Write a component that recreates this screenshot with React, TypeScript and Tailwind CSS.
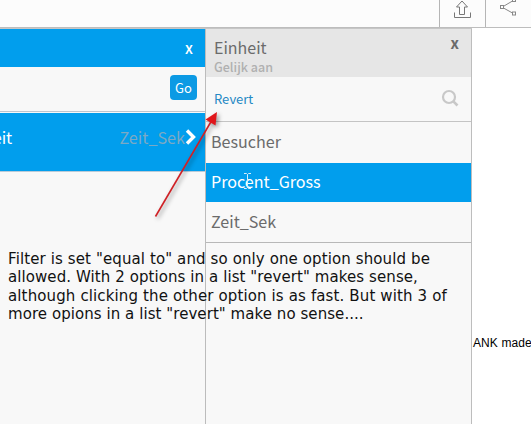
import React from "react";

interface FilterOption {
  label: string;
  selected?: boolean;
}

const options: FilterOption[] = [
  { label: "Besucher" },
  { label: "Procent_Gross", selected: true },
  { label: "Zeit_Sek" },
];

const noteLines = [
  { text: 'Filter is set "equal to" and so only one option should be', tracking: "tracking-[0.11px]" },
  { text: 'allowed. With 2 options in a list "revert" makes sense,', tracking: "tracking-[0.08px]" },
  { text: "although clicking the other option is as fast. But with 3 of", tracking: "tracking-[0.13px]" },
  { text: 'more opions in a list "revert" make no sense....', tracking: "tracking-[0.06px]" },
];

const Toolbar: React.FC = () => (
  <header className="flex h-[28px] shrink-0 justify-end border-b border-[#bdbdbd] bg-[#fcfcfc]">
    <button className="flex w-[47px] items-start border-x border-[#b5b5b5] pl-[12px]">
      <svg width="20" height="20" viewBox="0 0 20 20" fill="none" stroke="#777" strokeWidth="1">
        <path d="M10 1 4.5 7H7.5V14.5H12.5V7H15.5Z" />
        <path d="M2.5 12.5V17.5H18.5V12.5" />
      </svg>
    </button>
    <button className="flex w-[45px] items-start pl-[14px]">
      <svg width="18" height="18" viewBox="0 0 18 18" fill="none" stroke="#888" strokeWidth="1">
        <path d="M3.5 6.3 12.5 1M3.5 8 12.5 13" />
        <rect x="0.5" y="5.5" width="3" height="3" />
        <rect x="12.5" y="-1.5" width="3" height="3" />
        <rect x="12.5" y="12" width="3" height="3" />
      </svg>
    </button>
  </header>
);

const FilterPanel: React.FC = () => (
  <section className="w-[206px] shrink-0 border-r border-[#bcbcbc] bg-[#f8f8f8]">
    <div className="flex h-[38px] items-center justify-end bg-[#019eed] pr-[12px] pb-[2px] font-medium text-white">
      <button className="text-[15px] leading-none">x</button>
    </div>
    <div className="flex h-[45px] items-start justify-end border-b border-[#bdc5ce] pt-[8px] pr-[8px]">
      <button className="h-[25px] w-[27px] rounded-[4px] bg-[#0c9ae4] text-[13px] leading-[25px] text-white">
        Go
      </button>
    </div>
    <div className="mt-px flex h-[59px] items-start justify-between overflow-hidden border-b border-[#b9cbd8] bg-[#019eed] pt-[12px] pr-[9px] text-[16.2px] leading-[24px]">
      <span className="-ml-[41px] text-white">Einheit</span>
      <span className="flex items-center text-[#7ba9c4]">
        <span>Zeit_Sek</span>
        <svg width="11" height="16" viewBox="0 0 11 16" fill="none" stroke="#fff" strokeWidth="3.4">
          <path d="M2 1.5 8.5 8 2 14.5" />
        </svg>
      </span>
    </div>
  </section>
);

const OptionPanel: React.FC = () => (
  <section className="w-[266px] shrink-0 border-r border-[#bdbdbd] bg-[#f8f8f8] text-[#6b6b6b]">
    <div className="flex h-[48px] justify-between bg-[#e6e6e6] pl-[8px] pr-[12px]">
      <div className="pt-[7px]">
        <h2 className="text-[16px] leading-[22px]">Einheit</h2>
        <p className="text-[12.5px] leading-[17px] font-medium text-[#b0b0b0]">Gelijk aan</p>
      </div>
      <button className="mt-[6px] h-[16px] text-[15px] leading-[16px] font-bold">x</button>
    </div>
    <div className="flex h-[45px] items-center justify-between border-b border-[#c4c4c4] pl-[8px] pr-[12px]">
      <button className="text-[13px] text-[#2589c4]">Revert</button>
      <svg className="-mt-[2px]" width="18" height="18" viewBox="0 0 18 18" fill="none" stroke="#c8c8c8" strokeWidth="2.2">
        <circle cx="8" cy="8" r="6" />
        <path d="M12.3 12.3 16.5 16.5" strokeWidth="2.6" />
      </svg>
    </div>
    <ul className="border-b border-[#b8b8b8] text-[16.1px]">
      {options.map((option) => (
        <li
          key={option.label}
          className={`flex items-center pb-[2px] pl-[5px] ${
            option.selected ? "h-[39px] bg-[#019eed] text-white" : "h-[40.5px]"
          }`}
        >
          {option.label}
        </li>
      ))}
    </ul>
  </section>
);

export default function App() {
  return (
    <div className="relative flex h-[424px] w-[531px] flex-col overflow-hidden bg-white font-['Noto_Sans_CJK_SC','Noto_Sans',sans-serif]">
      <Toolbar />
      <main className="flex flex-1">
        <div className="flex border-t border-[#c6c6c6]">
          <FilterPanel />
          <OptionPanel />
        </div>
        <p className="mt-[308px] ml-px font-['Liberation_Sans',sans-serif] text-[12px] leading-[14px] tracking-[0.1px] whitespace-nowrap text-black">
          ANK made
        </p>
      </main>

      {/* Annotation drawn over both panels */}
      <div className="absolute top-[250px] left-[8px] font-['DejaVu_Sans',sans-serif] text-[15px] leading-[18.4px] whitespace-nowrap text-[#111]">
        {noteLines.map((line) => (
          <p key={line.text} className={line.tracking}>
            {line.text}
          </p>
        ))}
      </div>
      <svg className="absolute top-[105px] left-[148px] drop-shadow-[2px_2px_2px_rgba(0,0,0,0.4)]" width="80" height="120" viewBox="0 0 80 120">
        <path d="M7.5 111.5 64 15" stroke="#cf2025" strokeWidth="1.6" />
        <path d="M69 7 67.5 20.5 62.5 17.5 57.5 14.5Z" fill="#e0161b" />
      </svg>

      {/* Text cursor */}
      <svg className="absolute top-[173px] left-[243px]" width="9" height="16" viewBox="0 0 9 16" fill="none" stroke="#d6edfa" strokeWidth="1">
        <path d="M1 .5H3.5L4.5 1.5 5.5 .5H8M4.5 1.5V14.5M1 15.5H3.5L4.5 14.5 5.5 15.5H8" />
      </svg>
    </div>
  );
}
